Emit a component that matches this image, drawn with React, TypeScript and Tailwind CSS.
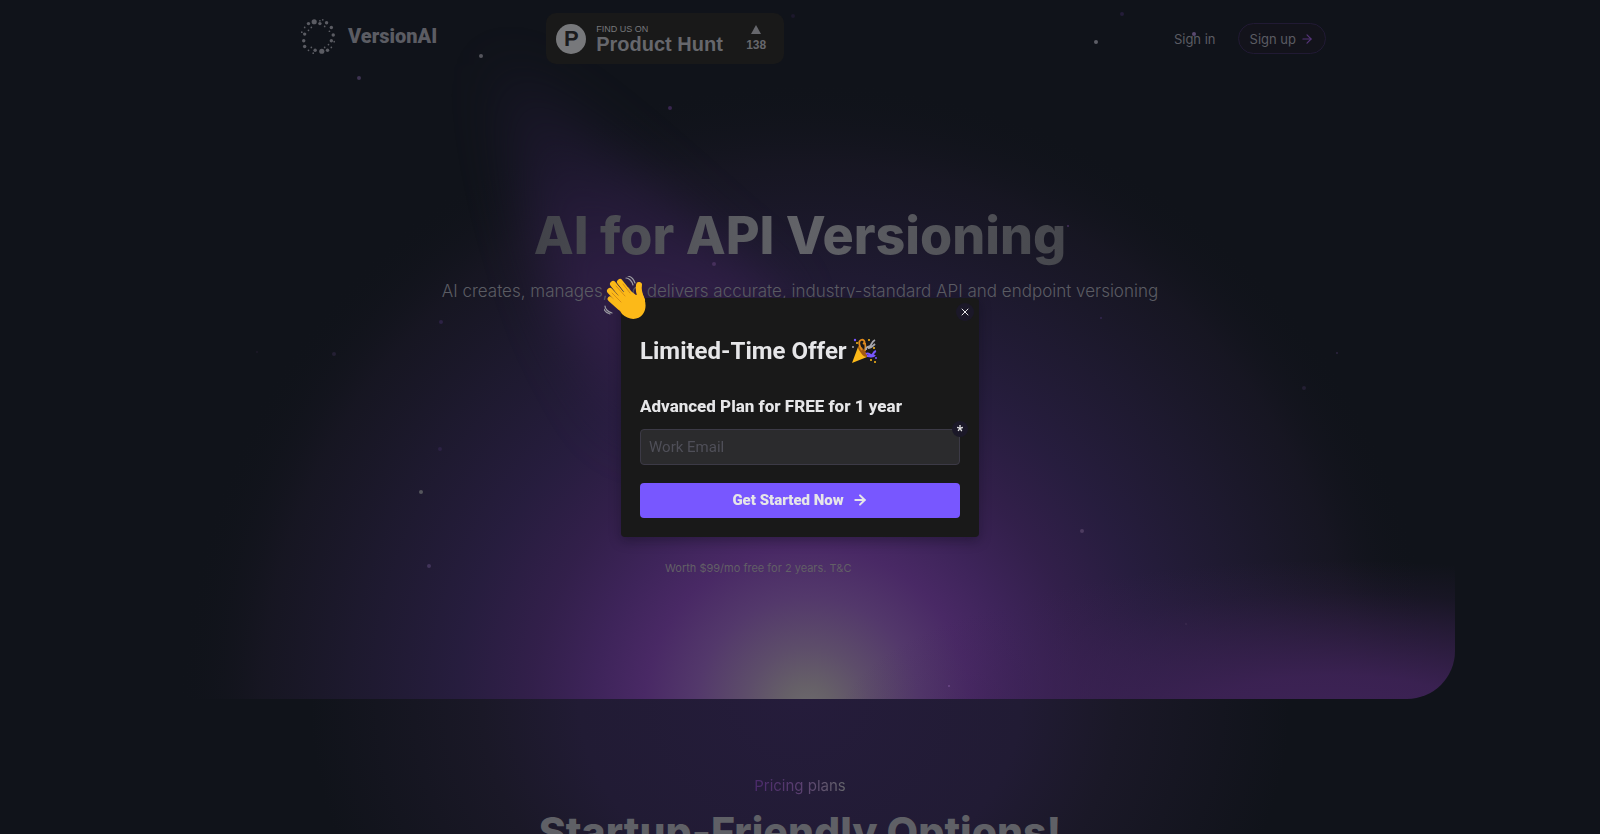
import React, { useState } from 'react'
import { ArrowRight, X } from 'lucide-react'

const STARS = [
  { x: 481, y: 56, r: 2, fill: '#55565d' },
  { x: 359, y: 78, r: 2, fill: '#3d3350' },
  { x: 670, y: 108, r: 2, fill: '#38264f' },
  { x: 793, y: 16, r: 2, fill: '#1c182b' },
  { x: 1096, y: 42, r: 2, fill: '#5d5e66' },
  { x: 1122, y: 14, r: 2, fill: '#241d38' },
  { x: 1194, y: 34, r: 2, fill: '#5a4a70' },
  { x: 421, y: 492, r: 2, fill: '#55565d' },
  { x: 429, y: 566, r: 2, fill: '#42345a' },
  { x: 440, y: 449, r: 2, fill: '#2c2244' },
  { x: 441, y: 322, r: 2, fill: '#2c2244' },
  { x: 334, y: 354, r: 2, fill: '#241f33' },
  { x: 257, y: 352, r: 1, fill: '#1d1a29' },
  { x: 714, y: 264, r: 2, fill: '#46305c' },
  { x: 1068, y: 226, r: 1, fill: '#46305c' },
  { x: 1101, y: 318, r: 1, fill: '#352650' },
  { x: 1082, y: 531, r: 2, fill: '#4d3c60' },
  { x: 1186, y: 624, r: 1, fill: '#3a2a4e' },
  { x: 1304, y: 388, r: 2, fill: '#241f33' },
  { x: 1337, y: 353, r: 1, fill: '#2c2440' },
  { x: 949, y: 686, r: 1, fill: '#6e4a8a' },
]

const LOGO_DOTS = [
  [34, 20, 2], [20, 5, 1], [27, 7, 2], [14, 6, 3], [8, 8, 2], [4, 12, 1], [4, 19, 2],
  [3, 26, 2], [4, 32, 2], [8, 36, 1], [15, 36, 2], [22, 37, 3], [28, 36, 2], [32, 33, 1],
  [32, 26, 2], [32, 12, 2], [20, 8, 2], [25, 11, 1], [29, 30, 1], [11, 12, 1], [8, 15, 1],
  [11, 33, 1], [25, 33, 1], [35, 27, 1], [30, 16, 1], [13, 39, 1], [23, 4, 1], [1, 17, 1],
]

function Logo() {
  return (
    <a href="#" className="flex items-center gap-3 pb-1.5 text-[#5b5c63]">
      <svg className="w-9 h-10" viewBox="0 0 36 42" fill="currentColor">
        {LOGO_DOTS.map(([x, y, r]) => (
          <circle key={`${x}-${y}`} cx={x} cy={y} r={r * 0.9} />
        ))}
      </svg>
      <span className="font-['Roboto',sans-serif] font-black text-xl leading-6">VersionAI</span>
    </a>
  )
}

function ProductHuntBadge() {
  return (
    <a
      href="#"
      className="flex items-center w-[238px] h-[51px] rounded-[10px] bg-[#191919] pl-2.5 pr-[18px] font-['Liberation_Sans',sans-serif] font-bold text-[#66676c]"
    >
      <span className="flex items-center justify-center size-[30px] rounded-full bg-[#77787b] text-[#1b1b1d] text-[22px] leading-6">
        P
      </span>
      <span className="flex flex-col ml-2.5">
        <span className="text-[9px] leading-[10px] font-normal text-[#77787b]">FIND US ON</span>
        <span className="text-xl leading-5">Product Hunt</span>
      </span>
      <span className="flex flex-col items-center gap-1 ml-auto">
        <svg className="w-2.5 h-[9px]" viewBox="0 0 10 9" fill="currentColor">
          <path d="M5 0l5 9H0z" />
        </svg>
        <span className="text-xs leading-[14px]">138</span>
      </span>
    </a>
  )
}

function HeroGlow() {
  return (
    <div className="absolute inset-0 overflow-hidden rounded-b-[48px]">
      <svg className="w-full h-full" viewBox="0 0 1310 699" preserveAspectRatio="xMidYMax slice">
        <defs>
          <radialGradient id="core" gradientUnits="userSpaceOnUse" cx="663" cy="710" r="630">
            <stop offset="0" stopColor="#6c6a6c" />
            <stop offset="0.04" stopColor="#666068" />
            <stop offset="0.1" stopColor="#5d4d6a" />
            <stop offset="0.18" stopColor="#53386b" />
            <stop offset="0.26" stopColor="#492965" />
            <stop offset="0.34" stopColor="#3e245a" />
            <stop offset="0.44" stopColor="#34204d" stopOpacity="0.95" />
            <stop offset="0.56" stopColor="#291e42" stopOpacity="0.9" />
            <stop offset="0.72" stopColor="#211b34" stopOpacity="0.8" />
            <stop offset="0.87" stopColor="#191725" stopOpacity="0.7" />
            <stop offset="1" stopColor="#10131a" stopOpacity="0" />
          </radialGradient>
          <linearGradient id="beam" x1="0" y1="0" x2="0" y2="1">
            <stop offset="0" stopColor="#2a1d42" stopOpacity="0.2" />
            <stop offset="0.3" stopColor="#2d1e46" stopOpacity="0.7" />
            <stop offset="0.6" stopColor="#37214f" />
            <stop offset="1" stopColor="#37214f" stopOpacity="0" />
          </linearGradient>
          <radialGradient id="floor">
            <stop offset="0" stopColor="#3e2357" />
            <stop offset="0.3" stopColor="#3c2254" stopOpacity="0.95" />
            <stop offset="0.6" stopColor="#3c2254" stopOpacity="0.5" />
            <stop offset="0.8" stopColor="#3c2254" stopOpacity="0.18" />
            <stop offset="1" stopColor="#3c2254" stopOpacity="0" />
          </radialGradient>
          <filter id="soft" x="-50%" y="-50%" width="200%" height="200%" colorInterpolationFilters="sRGB">
            <feGaussianBlur stdDeviation="26" />
          </filter>
        </defs>
        <circle cx="663" cy="710" r="630" fill="url(#core)" />
        <ellipse cx="1190" cy="725" rx="500" ry="165" fill="url(#floor)" />
        <path
          d="M350 60 C420 90 510 190 640 300 L600 480 L470 430 C410 320 370 200 350 60z"
          fill="url(#beam)"
          filter="url(#soft)"
          opacity="0.75"
        />
      </svg>
    </div>
  )
}

function WavingHand() {
  return (
    <svg className="absolute -left-[17px] -top-[22px] w-[43px] h-[44px]" viewBox="0 0 43 44" fill="none">
      <g stroke="#fcb918" strokeLinecap="round">
        <path d="M9 8l13 16" strokeWidth="6" />
        <path d="M16 6l12 15" strokeWidth="6" />
        <path d="M6 15l14 15" strokeWidth="6" />
        <path d="M6 23l10 9" strokeWidth="5" />
        <path d="M35 9c-1 5 0 9 3 15" strokeWidth="6" />
      </g>
      <path d="M9 24L24 13l8 6 6-2c4 8 5 15 1 21-5 7-15 6-21 0z" fill="#fcb918" />
      <path d="M12 10l9 10M8 17l9 9M19 8l7 9" stroke="#c97a14" strokeWidth="0.7" strokeLinecap="round" />
      <path d="M22 2c3 0 6 3 7 7M24 0c4 1 6 4 7 7M1 30c0 3 3 6 7 7M0 33c1 3 3 4 6 5" stroke="#9a9aa0" strokeWidth="1.2" strokeLinecap="round" />
    </svg>
  )
}

function PartyPopper() {
  return (
    <svg className="w-[26px] h-[26px]" viewBox="0 0 26 26" fill="none">
      <path d="M1 25L7 9c3 2 7 6 9 10z" fill="#fcb918" />
      <path d="M7 9c1-3 4 0 7 4s4 6 2 6-4-1-6-4-3-4-3-6z" fill="#a35a12" />
      <path d="M11 12c-3-4-4-9-1-10s5 2 2 4M14 13c1-4 0-8 0-8" stroke="#e08a1c" strokeWidth="1.8" />
      <path d="M15 12c0-4 2-3 4-4s1-4 5-6M17 10c3 0 5-2 7-4" stroke="#a7a7ad" strokeWidth="1.8" />
      <path d="M15 16c3-2 4 2 6 1s1-3 4-4M16 18c3 0 6 2 8-1" stroke="#7857ff" strokeWidth="2" />
      <g fill="#fcb918">
        <circle cx="6" cy="5" r="1" />
        <circle cx="18" cy="2" r="1" />
        <circle cx="23" cy="10" r="1" />
        <circle cx="20" cy="22" r="1" />
        <circle cx="24" cy="24" r="1" />
      </g>
      <circle cx="4" cy="2" r="1.2" fill="#7857ff" />
      <circle cx="2" cy="9" r="1" fill="#a7a7ad" />
      <circle cx="25" cy="20" r="1" fill="#7857ff" />
    </svg>
  )
}

function OfferDialog() {
  const [email, setEmail] = useState('')

  return (
    <div className="fixed inset-0 z-20 flex items-center justify-center">
      <form
        role="dialog"
        aria-labelledby="offer-title"
        onSubmit={(e) => e.preventDefault()}
        className="relative flex flex-col w-[358px] rounded bg-[#191919] px-[19px] pt-[37px] pb-[19px] font-['Roboto',sans-serif] text-[#e6e6e8] shadow-[0_4px_12px_rgba(10,8,20,0.35)]"
      >
        <WavingHand />
        <button
          type="button"
          aria-label="Close"
          className="absolute top-[5px] right-[5px] flex items-center justify-center size-[18px] rounded-full bg-[#1b1828]"
        >
          <X size={12} strokeWidth={2} />
        </button>
        <h2 id="offer-title" className="flex items-center gap-1 text-2xl leading-8 font-bold">
          Limited-Time Offer <PartyPopper />
        </h2>
        <label htmlFor="email" className="mt-[27px] text-[17px] leading-6 font-extrabold">
          Advanced Plan for FREE for 1 year
        </label>
        <div className="relative mt-[11px]">
          <input
            id="email"
            type="email"
            required
            placeholder="Work Email"
            value={email}
            onChange={(e) => setEmail(e.target.value)}
            className="block w-full h-9 rounded border border-[#3c3a46] bg-[#2b2b2d] px-2 text-[15px] placeholder:text-[#4f4f58] outline-none"
          />
          <span className="absolute -top-2 -right-2 flex items-center justify-center size-4 rounded-full bg-[#1b1828] pt-1 text-sm leading-4 font-bold">
            *
          </span>
        </div>
        <button
          type="submit"
          className="flex items-center justify-center gap-2 mt-[18px] h-[35px] rounded bg-[#7857ff] text-[15px] font-black"
        >
          Get Started Now
          <ArrowRight size={16} strokeWidth={3} />
        </button>
      </form>
    </div>
  )
}

export default function App() {
  return (
    <div className="relative h-screen overflow-hidden bg-[#10131a] font-['Inter',sans-serif] text-[#5b5c63]">
      <section className="relative h-[699px] max-w-[1310px] mx-auto">
        <HeroGlow />
        <header className="relative flex items-center max-w-[1052px] mx-auto pl-[26px] pt-[13px]">
          <Logo />
          <div className="ml-[109px]">
            <ProductHuntBadge />
          </div>
          <nav className="flex items-center gap-[22px] ml-auto text-[13px] leading-5">
            <a href="#">Sign in</a>
            <a
              href="#"
              className="flex items-center gap-1 h-[31px] rounded-full border border-[#211a34] bg-[#13131b] px-[11px]"
            >
              Sign up <ArrowRight size={14} className="text-[#56357a]" />
            </a>
          </nav>
        </header>
        <div className="relative pt-[141px] text-center">
          <h1 className="text-[52px] leading-[62px] font-extrabold text-transparent bg-clip-text bg-[linear-gradient(90deg,#3a3b42_25%,#626368_50%,#3f4046_75%)]">
            AI for API Versioning
          </h1>
          <p className="mt-2.5 text-[17px] leading-7 font-light">
            AI creates, manages, and delivers accurate, industry-standard API and endpoint versioning
          </p>
          <p className="w-[270px] mx-auto mt-[255px] text-left text-[11px] leading-4 text-[#625f66]">
            Worth $99/mo free for 2 years. T&amp;C
          </p>
        </div>
      </section>

      <section className="pt-[75px] text-center bg-[radial-gradient(ellipse_490px_420px_at_50%_0,#251c3b,#211b34_45%,#1a1827_65%,#10131a)]">
        <p className="text-[15px] leading-6">
          <span className="text-transparent bg-clip-text bg-[linear-gradient(90deg,#4b2a6b,#5a3f70_50%,#66676c)]">
            Pricing plans
          </span>
        </p>
        <h2 className="mt-1.5 pb-24 text-[41px] leading-[56px] font-extrabold text-[#5f6066]">
          Startup-Friendly Options!
        </h2>
      </section>

      <svg className="absolute inset-0 w-full h-full pointer-events-none" viewBox="0 0 1600 834" preserveAspectRatio="xMidYMin slice">
        {STARS.map((s) => (
          <circle key={`${s.x}-${s.y}`} cx={s.x} cy={s.y} r={s.r} fill={s.fill} />
        ))}
      </svg>

      <OfferDialog />
    </div>
  )
}
